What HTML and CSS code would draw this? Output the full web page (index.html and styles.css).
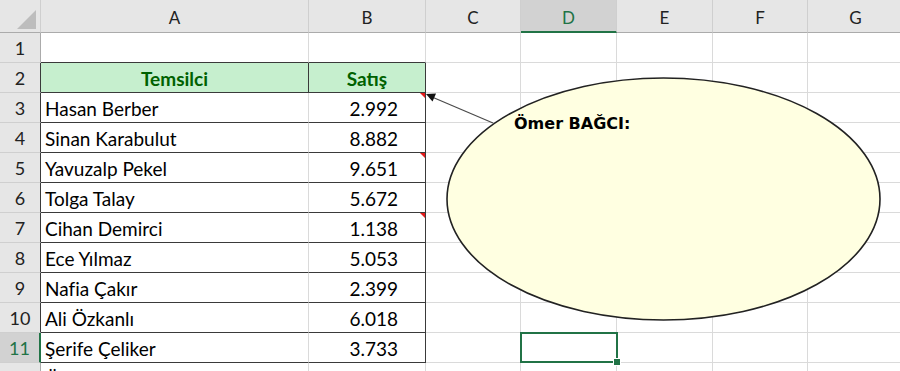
FILE: index.html
```html
<!DOCTYPE html>
<html lang="tr">

<head>
  <meta charset="UTF-8" />
  <title>Satış</title>
  <link rel="stylesheet" href="styles.css">
</head>

<body>
  <div class="sheet">
    <div class="corner"><span class="corner-mark"></span></div>
    <div class="col-head">A</div>
    <div class="col-head">B</div>
    <div class="col-head">C</div>
    <div class="col-head active">D</div>
    <div class="col-head">E</div>
    <div class="col-head">F</div>
    <div class="col-head">G</div>

    <div class="row-head">1</div>
    <div class="cell above"></div><div class="cell above"></div><div class="cell"></div><div class="cell"></div><div class="cell"></div><div class="cell"></div><div class="cell"></div>

    <div class="row-head edge">2</div>
    <div class="cell title">Temsilci</div><div class="cell title">Satış</div><div class="cell"></div><div class="cell"></div><div class="cell"></div><div class="cell"></div><div class="cell"></div>

    <div class="row-head edge">3</div>
    <div class="cell name">Hasan Berber</div><div class="cell num note">2.992</div><div class="cell"></div><div class="cell"></div><div class="cell"></div><div class="cell"></div><div class="cell"></div>

    <div class="row-head edge">4</div>
    <div class="cell name">Sinan Karabulut</div><div class="cell num">8.882</div><div class="cell"></div><div class="cell"></div><div class="cell"></div><div class="cell"></div><div class="cell"></div>

    <div class="row-head edge">5</div>
    <div class="cell name">Yavuzalp Pekel</div><div class="cell num note">9.651</div><div class="cell"></div><div class="cell"></div><div class="cell"></div><div class="cell"></div><div class="cell"></div>

    <div class="row-head edge">6</div>
    <div class="cell name">Tolga Talay</div><div class="cell num">5.672</div><div class="cell"></div><div class="cell"></div><div class="cell"></div><div class="cell"></div><div class="cell"></div>

    <div class="row-head edge">7</div>
    <div class="cell name">Cihan Demirci</div><div class="cell num note">1.138</div><div class="cell"></div><div class="cell"></div><div class="cell"></div><div class="cell"></div><div class="cell"></div>

    <div class="row-head edge">8</div>
    <div class="cell name">Ece Yılmaz</div><div class="cell num">5.053</div><div class="cell"></div><div class="cell"></div><div class="cell"></div><div class="cell"></div><div class="cell"></div>

    <div class="row-head edge">9</div>
    <div class="cell name">Nafia Çakır</div><div class="cell num">2.399</div><div class="cell"></div><div class="cell"></div><div class="cell"></div><div class="cell"></div><div class="cell"></div>

    <div class="row-head edge">10</div>
    <div class="cell name">Ali Özkanlı</div><div class="cell num">6.018</div><div class="cell"></div><div class="cell"></div><div class="cell"></div><div class="cell"></div><div class="cell"></div>

    <div class="row-head active">11</div>
    <div class="cell name">Şerife Çeliker</div><div class="cell num">3.733</div><div class="cell"></div><div class="cell selected"></div><div class="cell"></div><div class="cell"></div><div class="cell"></div>

    <div class="row-head">12</div>
    <div class="cell">Ömer Bağcı</div><div class="cell"></div><div class="cell"></div><div class="cell"></div><div class="cell"></div><div class="cell"></div><div class="cell"></div>

    <!-- comment shape floating over the sheet -->
    <div class="comment">
      <svg width="900" height="371" viewBox="0 0 900 371">
        <line x1="493" y1="123" x2="432" y2="97" stroke="#4a4a4a" stroke-width="1.2" />
        <polygon points="426,94 436,93.5 432.5,101.5" fill="#111" />
        <ellipse cx="663.5" cy="199" rx="216.5" ry="121" fill="#ffffe1" stroke="#222" stroke-width="1.6" />
      </svg>
      <p class="comment-text">Ömer BAĞCI:</p>
    </div>
  </div>
</body>

</html>
```

FILE: styles.css
```css
* {
  margin: 0;
  padding: 0;
  box-sizing: border-box;
}

body {
  width: 900px;
  height: 371px;
  overflow: hidden;
  background: #ffffff;
  font-family: Lato, 'Liberation Sans', sans-serif;
  color: #000000;
}

.sheet {
  position: relative;
  display: grid;
  grid-template-columns: 41px 268px 117px 95px 96px 96px 95px 96px;
  grid-template-rows: 33px repeat(12, 30px);
}

.corner {
  background: #e6e6e6;
  border-right: 1px solid #cfcfcf;
  border-bottom: 1px solid #ababab;
  display: flex;
  justify-content: flex-end;
  align-items: flex-end;
  padding: 0 4px 3px 0;
}

.corner-mark {
  width: 19px;
  height: 19px;
  background: #bdbdbd;
  clip-path: polygon(100% 0, 100% 100%, 0 100%);
}

.col-head {
  background: #e6e6e6;
  border-right: 1px solid #cfcfcf;
  border-bottom: 1px solid #ababab;
  text-align: center;
  font-size: 17px;
  line-height: 26px;
  padding-top: 5px;
  color: #222222;
}

.col-head.active {
  background: #d2d2d2;
  color: #217346;
  border-bottom: 2px solid #217346;
}

.row-head {
  background: #e6e6e6;
  border-right: 1px solid #ababab;
  border-bottom: 1px solid #cfcfcf;
  text-align: center;
  font-size: 18px;
  line-height: 27px;
  padding-top: 2px;
  color: #222222;
}

.row-head.edge {
  border-right-color: #3a3a3a;
}

.row-head.active {
  background: #d2d2d2;
  color: #217346;
  border-right: 2px solid #217346;
}

.cell {
  position: relative;
  border-right: 1px solid #dadada;
  border-bottom: 1px solid #dadada;
  font-size: 19px;
  line-height: 27px;
  padding: 2px 4px 0;
  white-space: nowrap;
}

.cell.above {
  border-bottom-color: #3a3a3a;
}

.cell.title {
  background: #c6efce;
  color: #006100;
  font-weight: 700;
  text-align: center;
  border-right-color: #3a3a3a;
  border-bottom-color: #3a3a3a;
}

.cell.name {
  border-bottom-color: #3a3a3a;
}

.cell.num {
  text-align: right;
  padding-right: 27px;
  border-right-color: #3a3a3a;
  border-bottom-color: #3a3a3a;
}

/* red comment indicator */
.cell.note::after {
  content: "";
  position: absolute;
  top: 0;
  right: 0;
  border-top: 5px solid #e41b1b;
  border-left: 5px solid transparent;
}

.cell.selected::after {
  content: "";
  position: absolute;
  inset: -1px -2px -1px -1px;
  border: 2px solid #217346;
}

.cell.selected::before {
  content: "";
  position: absolute;
  right: -5px;
  bottom: -4px;
  width: 6px;
  height: 6px;
  background: #217346;
  border: 1px solid #ffffff;
  z-index: 1;
}

.comment {
  position: absolute;
  top: 0;
  left: 0;
  width: 900px;
  height: 371px;
  pointer-events: none;
}

.comment svg {
  display: block;
}

.comment-text {
  position: absolute;
  left: 514px;
  top: 114px;
  font-family: 'DejaVu Sans', Verdana, sans-serif;
  font-weight: 700;
  font-size: 16px;
  line-height: 20px;
  color: #000000;
}
```
